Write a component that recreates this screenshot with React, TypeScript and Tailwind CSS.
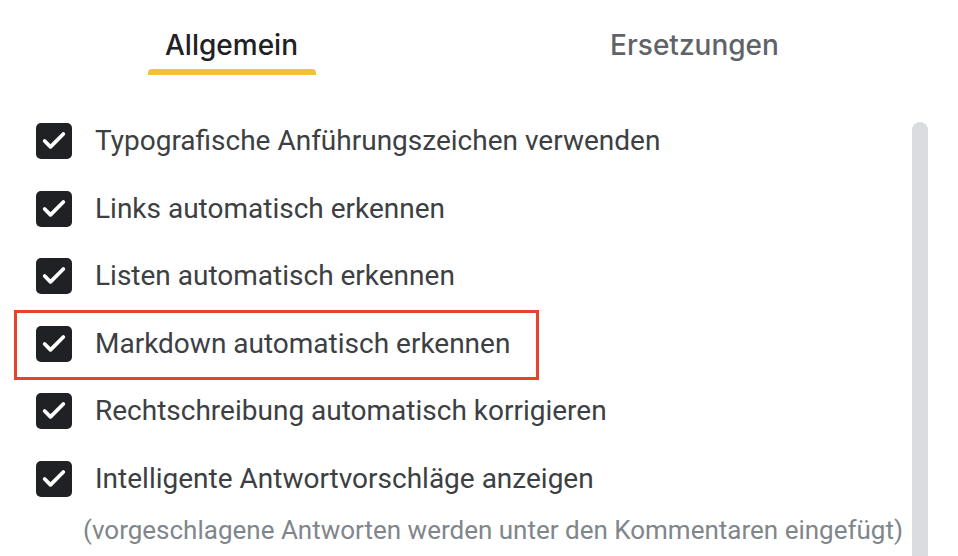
import { Check } from "lucide-react";

const options = [
  "Typografische Anführungszeichen verwenden",
  "Links automatisch erkennen",
  "Listen automatisch erkennen",
  "Markdown automatisch erkennen",
  "Rechtschreibung automatisch korrigieren",
  "Intelligente Antwortvorschläge anzeigen",
];

const CheckBox = () => (
  <div className="w-9 h-9 rounded-[5px] bg-[#202124] flex items-center justify-center shrink-0">
    <Check className="w-7 h-7 text-white" strokeWidth={3.2} />
  </div>
);

export default function App() {
  return (
    <div className="w-[958px] h-[556px] bg-white overflow-hidden font-['Roboto',sans-serif]">
      {/* tabs */}
      <div className="flex w-[926px] h-[76px]">
        <div className="w-1/2 flex flex-col items-center">
          <div className="pt-[28px] h-[69px] text-[28px] font-medium text-[#202124] font-['Inter',sans-serif] leading-[34px]">
            Allgemein
          </div>
          <div className="w-[168px] h-[6px] bg-[#f6bf3e] rounded-t-[4px]" />
        </div>
        <div className="w-1/2 flex flex-col items-center">
          <div className="pt-[28px] text-[28px] font-medium text-[#5f6368] font-['Inter',sans-serif] leading-[34px]">
            Ersetzungen
          </div>
        </div>
      </div>

      <div className="flex mt-[46px]">
        <div className="w-[912px] pl-[36px]">
          {options.map((label, i) => (
            <div
              key={label}
              className={
                i === 3
                  ? "relative h-[67.5px] flex items-start pt-[1px]"
                  : "h-[67.5px] flex items-start pt-[1px]"
              }
            >
              {i === 3 && (
                <div className="absolute left-[-22px] top-[-15px] w-[525px] h-[70px] border-[3px] border-[#e8412c]" />
              )}
              <CheckBox />
              <span className="ml-[23px] text-[28px] leading-[36px] text-[#3c4043]">
                {label}
              </span>
            </div>
          ))}
          <div className="-mt-[16px] pl-[47px] text-[26px] text-[#80868b] whitespace-nowrap">
            (vorgeschlagene Antworten werden unter den Kommentaren eingefügt)
          </div>
        </div>
        <div className="w-4 h-[440px] bg-[#dadce0] rounded-t-full" />
      </div>
    </div>
  );
}
